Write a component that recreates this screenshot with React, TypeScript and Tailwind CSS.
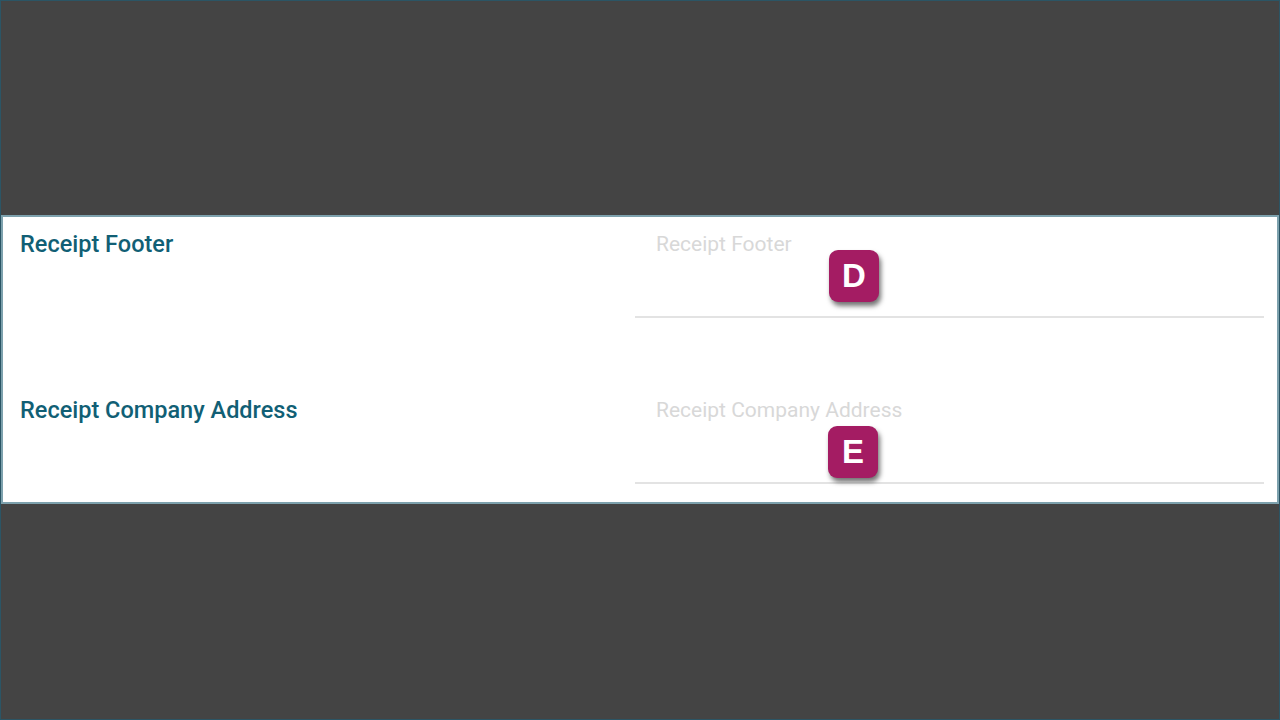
const rows = [
  { label: 'Receipt Footer', badge: 'D', badgeClass: 'left-[194px] top-[20px]' },
  { label: 'Receipt Company Address', badge: 'E', badgeClass: 'left-[193px] top-[30px]' },
]

function Badge({ letter, className }: { letter: string; className: string }) {
  return (
    <div
      className={`absolute flex h-[52px] w-[50px] items-center justify-center rounded-[9px] bg-[#a41c63] text-[33px] font-bold text-white shadow-[2px_4px_5px_rgba(0,0,0,0.55)] ${className}`}
      style={{ fontFamily: '"Liberation Sans", Arial, sans-serif' }}
    >
      {letter}
    </div>
  )
}

export default function App() {
  return (
    <div
      className="flex h-[720px] w-[1280px] flex-col border border-[#2b5565] bg-[#444444]"
      style={{ fontFamily: 'Roboto, "Noto Sans", sans-serif' }}
    >
      <div className="h-[214px]" />
      <div className="border-2 border-[#7da1ad] bg-white pb-[18px] pt-[13px] pr-[13px]">
        <div className="flex flex-col gap-[78px]">
          {rows.map((r) => (
            <div key={r.label} className="grid grid-cols-[632px_1fr]">
              <div className="pl-[17px] text-[23.5px] font-medium leading-7 text-[#115f75]">
                {r.label}
              </div>
              <div className="relative h-[88px] border-b-2 border-[#e3e3e3] pl-[21px]">
                <span className="text-[21px] leading-7 text-[#d8d8d8]">{r.label}</span>
                <Badge letter={r.badge} className={r.badgeClass} />
              </div>
            </div>
          ))}
        </div>
      </div>
    </div>
  )
}
